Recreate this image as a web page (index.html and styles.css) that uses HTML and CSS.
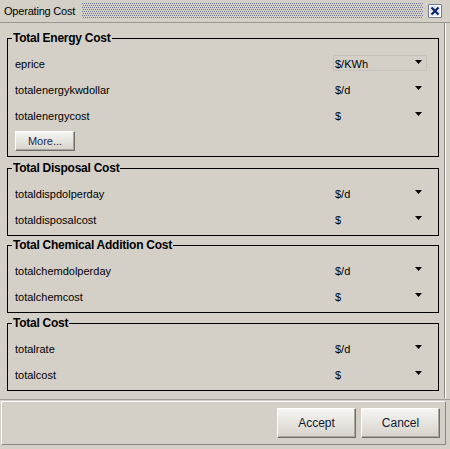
FILE: index.html
```html
<!DOCTYPE html>
<html>
<head>
<meta charset="utf-8">
<link rel="stylesheet" href="styles.css">
</head>
<body>
<div class="window">
  <div class="titlebar">
    <span class="title">Operating Cost</span>
    <svg class="grip" height="16">
      <defs>
        <pattern id="dots" width="2" height="4" patternUnits="userSpaceOnUse">
          <rect x="0" y="0" width="1" height="1" fill="#6f7799"/>
          <rect x="1" y="2" width="1" height="1" fill="#6f7799"/>
        </pattern>
      </defs>
      <rect x="0" y="0" width="100%" height="16" fill="url(#dots)"/>
    </svg>
    <div class="close">
      <svg width="14" height="14" viewBox="0 0 14 14">
        <rect x="0.5" y="0.5" width="13" height="13" fill="#0a246a"/>
        <rect x="1.5" y="1.5" width="11" height="11" fill="#e8e8f0" stroke="#ffffff" stroke-width="1"/>
        <path d="M3.5 3.5 L10.5 10.5 M10.5 3.5 L3.5 10.5" stroke="#0a246a" stroke-width="2.2"/>
      </svg>
    </div>
  </div>
  <div class="content">
    <div class="group g1">
      <div class="group-title">Total Energy Cost</div>
      <div class="row"><span class="label">eprice</span><div class="combo focused"><span>$/KWh</span><svg class="arrow" width="7" height="4" viewBox="0 0 7 4"><polygon points="0,0 7,0 3.5,4" fill="#000"/></svg></div></div>
      <div class="row"><span class="label">totalenergykwdollar</span><div class="combo"><span>$/d</span><svg class="arrow" width="7" height="4" viewBox="0 0 7 4"><polygon points="0,0 7,0 3.5,4" fill="#000"/></svg></div></div>
      <div class="row"><span class="label">totalenergycost</span><div class="combo"><span>$</span><svg class="arrow" width="7" height="4" viewBox="0 0 7 4"><polygon points="0,0 7,0 3.5,4" fill="#000"/></svg></div></div>
      <button class="more">More...</button>
    </div>
    <div class="group g2">
      <div class="group-title">Total Disposal Cost</div>
      <div class="row"><span class="label">totaldispdolperday</span><div class="combo"><span>$/d</span><svg class="arrow" width="7" height="4" viewBox="0 0 7 4"><polygon points="0,0 7,0 3.5,4" fill="#000"/></svg></div></div>
      <div class="row"><span class="label">totaldisposalcost</span><div class="combo"><span>$</span><svg class="arrow" width="7" height="4" viewBox="0 0 7 4"><polygon points="0,0 7,0 3.5,4" fill="#000"/></svg></div></div>
    </div>
    <div class="group g3">
      <div class="group-title">Total Chemical Addition Cost</div>
      <div class="row"><span class="label">totalchemdolperday</span><div class="combo"><span>$/d</span><svg class="arrow" width="7" height="4" viewBox="0 0 7 4"><polygon points="0,0 7,0 3.5,4" fill="#000"/></svg></div></div>
      <div class="row"><span class="label">totalchemcost</span><div class="combo"><span>$</span><svg class="arrow" width="7" height="4" viewBox="0 0 7 4"><polygon points="0,0 7,0 3.5,4" fill="#000"/></svg></div></div>
    </div>
    <div class="group g4">
      <div class="group-title">Total Cost</div>
      <div class="row"><span class="label">totalrate</span><div class="combo"><span>$/d</span><svg class="arrow" width="7" height="4" viewBox="0 0 7 4"><polygon points="0,0 7,0 3.5,4" fill="#000"/></svg></div></div>
      <div class="row"><span class="label">totalcost</span><div class="combo"><span>$</span><svg class="arrow" width="7" height="4" viewBox="0 0 7 4"><polygon points="0,0 7,0 3.5,4" fill="#000"/></svg></div></div>
    </div>
  </div>
  <div class="sep"></div>
  <div class="footer">
    <button class="btn">Accept</button>
    <button class="btn">Cancel</button>
  </div>
</div>
</body>
</html>
```
FILE: styles.css
```css
html, body {
  margin: 0;
  padding: 0;
  background: #d4d0c8;
}
body {
  font-family: "Liberation Sans", Arial, sans-serif;
  font-size: 11px;
  color: #000;
}
.window {
  width: 450px;
  height: 449px;
  display: flex;
  flex-direction: column;
  overflow: hidden;
}
.titlebar {
  height: 23px;
  box-sizing: border-box;
  border-bottom: 1px solid #9a9891;
  display: flex;
  align-items: center;
}
.title {
  padding-left: 4px;
  font-size: 11px;
  letter-spacing: -0.2px;
  line-height: 14px;
  margin-top: -1px;
}
.grip {
  flex: 1;
  min-width: 0;
  margin-left: 7px;
  height: 16px;
  margin-top: -1px;
  display: block;
}
.close {
  width: 14px;
  height: 14px;
  margin-left: 5px;
  margin-right: 8px;
  margin-top: -1px;
  display: flex;
}
.content {
  height: 375px;
  width: 445px;
  box-sizing: border-box;
  border-right: 1px solid #8a8882;
  box-shadow: 1px 0 0 #ffffff;
  padding: 15px 0 0 7px;
  display: flex;
  flex-direction: column;
}
.group {
  position: relative;
  width: 432px;
  box-sizing: border-box;
  border: 1px solid #000;
  padding: 12px 11px 2px 7px;
  display: flex;
  flex-direction: column;
}
.g1 {
  padding-bottom: 5px;
}
.g2 {
  margin-top: 11px;
}
.g3 {
  margin-top: 9px;
}
.g4 {
  margin-top: 10px;
}
.group-title {
  position: absolute;
  top: -8px;
  left: 4px;
  padding: 0 1px;
  background: #d4d0c8;
  font-weight: bold;
  font-size: 12px;
  letter-spacing: -0.25px;
  line-height: 14px;
}
.row {
  height: 26px;
  display: flex;
  align-items: center;
  justify-content: space-between;
}
.label {
  line-height: 14px;
}
.combo {
  width: 94px;
  height: 16px;
  box-sizing: border-box;
  border: 1px solid transparent;
  display: flex;
  align-items: center;
  justify-content: space-between;
  padding: 0 4px 0 1px;
  margin-top: -2px;
}
.combo span {
  margin-top: 1px;
}
.combo.focused {
  border-color: #c6c3bc;
}
.arrow {
  margin-bottom: 2px;
}
.more {
  margin-top: 2px;
  width: 60px;
  height: 20px;
  box-sizing: border-box;
  border: 1px solid;
  border-color: #ffffff #6f6d68 #6f6d68 #ffffff;
  box-shadow: inset -1px -1px 0 #a9a69e;
  background: linear-gradient(#f6f5f2, #d6d2ca);
  font-family: "Liberation Sans", Arial, sans-serif;
  font-size: 11px;
  color: #1c2550;
  padding: 0;
}
.sep {
  height: 1px;
  background: #a09e98;
  margin-top: 1px;
}
.footer {
  margin-top: 1px;
  margin-left: 1px;
  width: 445px;
  height: 44px;
  box-sizing: border-box;
  border: 1px solid;
  border-color: #ffffff #8a8882 #8a8882 #ffffff;
  display: flex;
  justify-content: flex-end;
  gap: 5px;
  padding: 6px 5px 0 0;
}
.btn {
  width: 79px;
  height: 30px;
  box-sizing: border-box;
  border: 1px solid;
  border-color: #ffffff #6f6d68 #6f6d68 #ffffff;
  box-shadow: inset -1px -1px 0 #a9a69e;
  background: linear-gradient(#f6f5f2, #d6d2ca);
  font-family: "Liberation Sans", Arial, sans-serif;
  font-size: 12px;
  color: #111a33;
  padding: 0;
}
```
